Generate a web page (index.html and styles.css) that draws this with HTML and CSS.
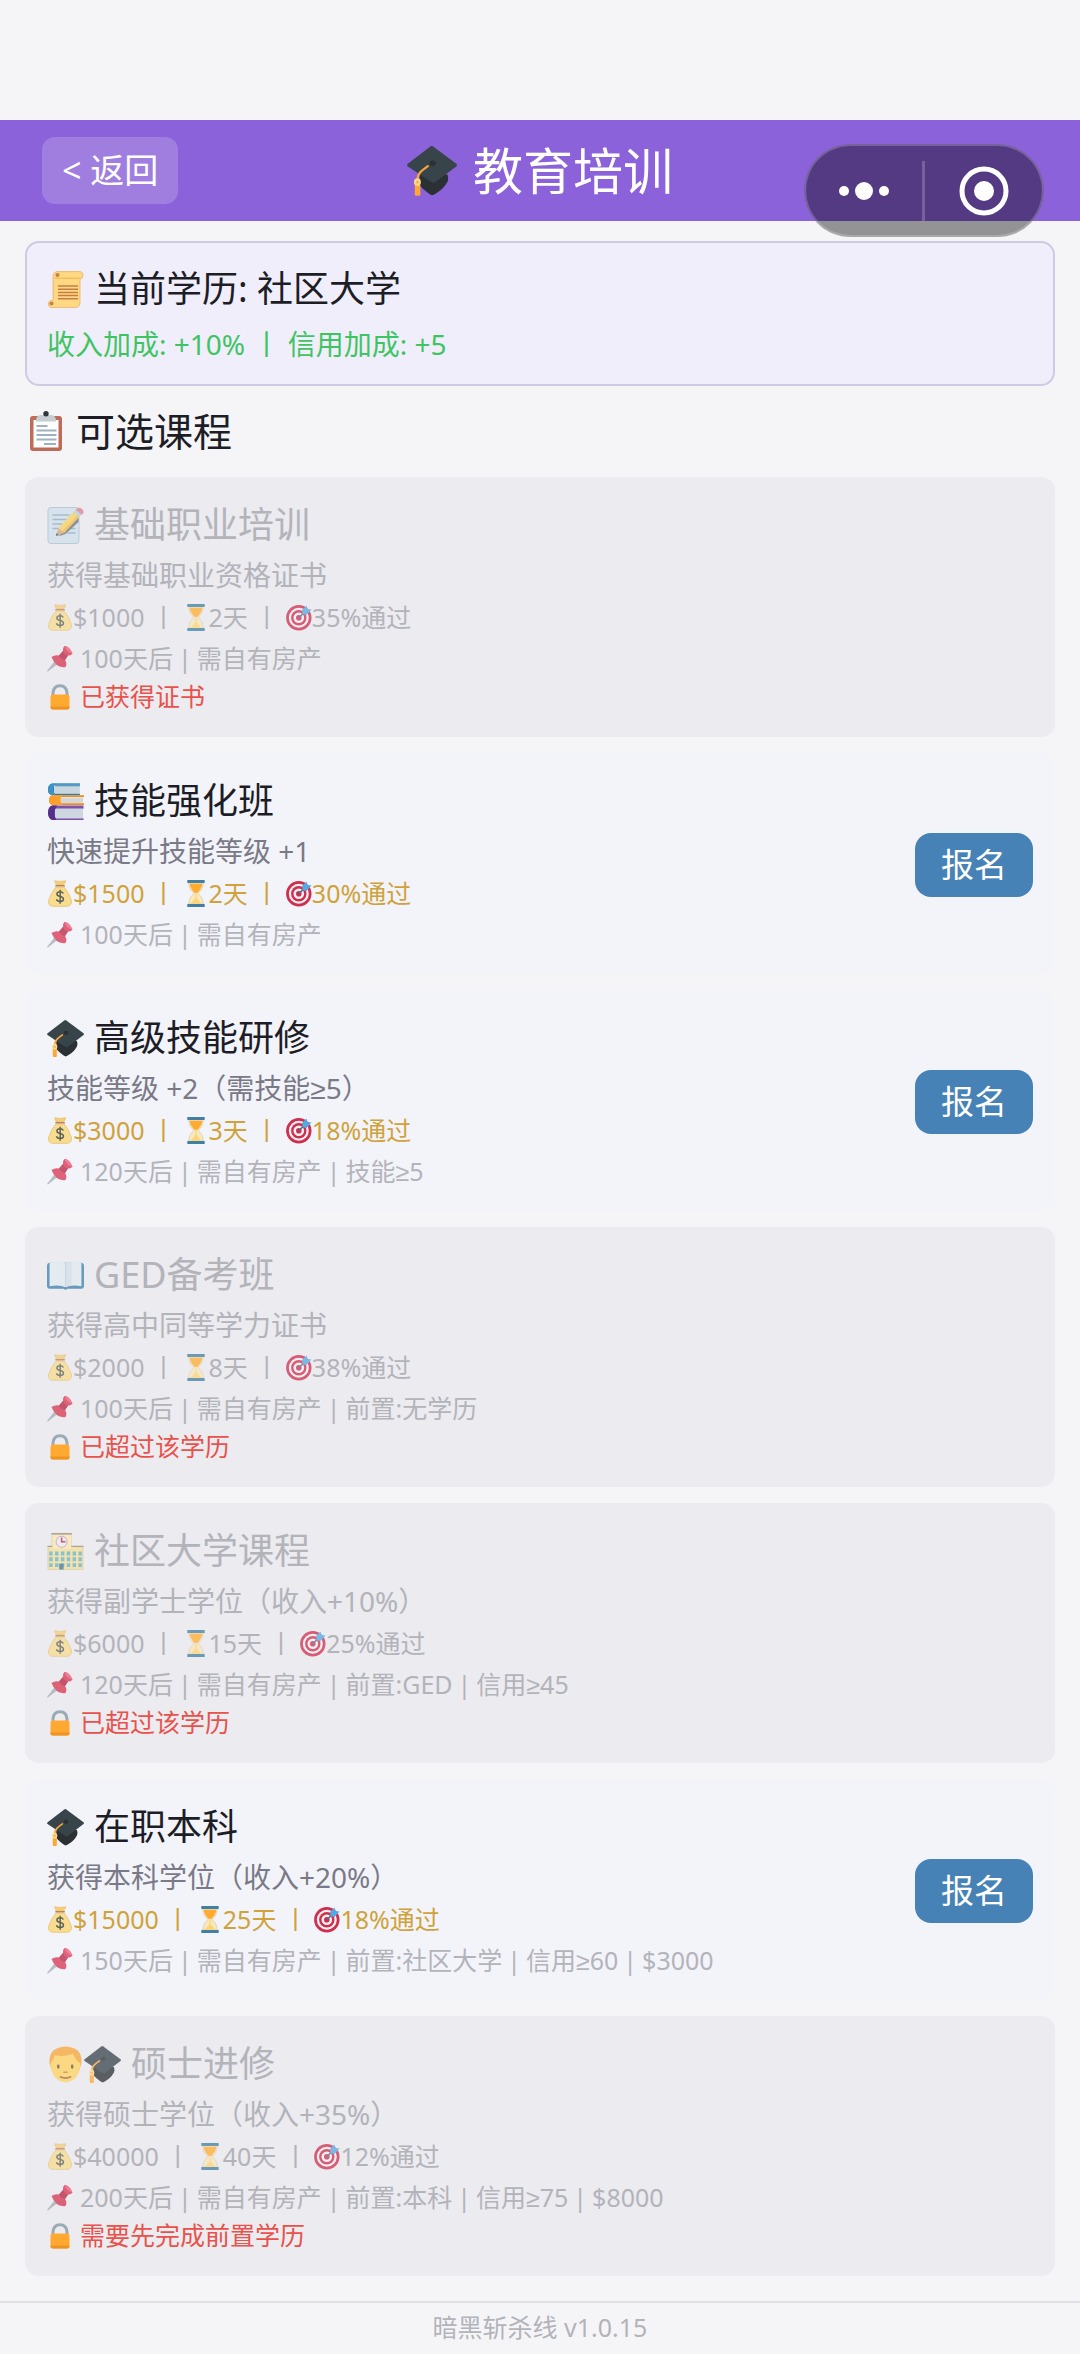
FILE: index.html
```html
<!DOCTYPE html>
<html lang="zh-CN">
<head>
<meta charset="utf-8">
<meta name="viewport" content="width=device-width, initial-scale=1">
<title>教育培训</title>
<link rel="stylesheet" href="styles.css">
</head>
<body>
<svg class="sprite" aria-hidden="true">
  <symbol id="cap" viewBox="0 0 36 36">
    <path fill="#2a3034" d="M9 18v9.500c1 2.500 6 6.500 9 8 3-1 8.500-5 10-8 2-2 2-5 1-7z"/>
    <path fill="#37444a" d="M16.800.4q1-.7 2 0L35.500 12.800q1 .9 0 1.900L20.500 26q-1.500 1-3 0L.6 14.700q-1-.9 0-1.900z"/>
    <ellipse cx="18.500" cy="12.500" rx="2.200" ry="2" fill="#2a3034"/>
    <path fill="none" stroke="#f9a63a" stroke-width="1.600" stroke-linecap="round" d="M15 14.500C10 18 7.600 20 7.500 24"/>
    <path fill="#ffa733" d="M5.600 28h4v7.400q-2 1-4 0z"/>
    <ellipse cx="7.500" cy="26" rx="2.500" ry="2.800" fill="#ffd98a"/><circle cx="7.500" cy="26" r="1.200" fill="#f0b95a"/>
  </symbol>
  <symbol id="scroll" viewBox="0 0 36 37">
    <path fill="#ffd884" stroke="#e9b35e" stroke-width=".8" d="M9 .6h24q3 1 2.500 4.400-.6 3-3 3V32q-.4 4-4 4.600H3Q.2 35 .8 31.500 2 29 5.600 29V5Q6 1.500 9 .6z"/>
    <path fill="#f5bd62" d="M9 6.500h23V8H9q-1.500 0-3-1.500z"/>
    <circle cx="10" cy="4" r="2" fill="#c98046"/><circle cx="4" cy="32.500" r="2" fill="#c98046"/>
    <path stroke="#c77c45" stroke-width="1.500" d="M10.500 15h20M10.500 18.200h20M10.500 21.400h20M10.500 24.600h20M10.500 27.800h20"/>
  </symbol>
  <symbol id="clipboard" viewBox="-3 0 38 41">
    <rect x="2" y="5" width="32" height="35" rx="3" fill="#bd6c59"/>
    <path fill="#fff" d="M5.500 9h25v27.500h-25z"/>
    <path fill="#c6ced3" d="M8 10q0-5 4-6h3.500q2.500-4.500 5 0H24q4 1 4 6v.500H8z"/>
    <circle cx="18" cy="2.800" r="2.700" fill="#30373b"/>
    <path stroke="#9db1c0" stroke-width="1.800" d="M8.500 15h11M8.500 19.500h20M8.500 24h20M8.500 28.500h20M16 33h12"/>
  </symbol>
  <symbol id="memo" viewBox="0 0 36 37">
    <rect x=".5" y=".5" width="31" height="36" rx="3" fill="#cfe1ed" stroke="#a9c0d0"/>
    <path stroke="#8eacbe" stroke-width="1.300" d="M5 8h17M5 12.500h14M5 17h10M5 21.500h6M21 21.500h7M20 26h8"/>
    <path fill="#6a7379" d="M12 28 31 10v5L18 27q-4 2-9 2z"/>
    <path fill="#f9cf5c" d="m11 21 15.500-16.500 5.500 5L16.500 26z"/>
    <path fill="#f3b64a" d="m14.500 24.500 16-16.500 1.500 1.500L16.500 26z"/>
    <path fill="#b5d0de" d="m26 5 2.200-2.300 5.600 5L31.700 10z"/>
    <path fill="#d98291" d="m28.200 2.700 2-1.600q3-1 5 1.600 1.800 2.500 0 4.200L33.800 7.700z"/>
    <path fill="#d9a878" d="m11 21 5.500 5-8 3z"/><path fill="#4a4a4a" d="m9.300 25.800 1.800 2-2.800 1.300z"/>
  </symbol>
  <symbol id="money" viewBox="0 0 26 28">
    <path fill="#f9dc8d" stroke="#dfb961" stroke-width=".7" d="M8.500 7.500h9q5 6 7.300 13.500.8 5.500-4 6.300H5Q.3 26.500 1.200 21 3.500 13.500 8.500 7.500z"/>
    <path fill="#f5ce77" stroke="#dfb961" stroke-width=".6" d="M7.500.7 13 1.500l6-.8q-.5 2.500-2 4h-8q-1.500-2-1.500-4z"/>
    <path stroke="#c08052" stroke-width="1.700" stroke-linecap="round" d="M8.800 6h8.600"/>
    <path fill="none" stroke="#59615a" stroke-width="1.500" d="M16.500 14q-1-1.800-3.500-1.800-3 0-3.200 2.200 0 2 3.200 2.600 3.600.8 3.600 3 0 2.200-3.600 2.200-3 0-3.700-2.200M13.200 10v14.500"/>
  </symbol>
  <symbol id="hourglass" viewBox="0 0 26 28">
    <path fill="#f7e8bd" stroke="#d6cba6" stroke-width=".7" d="M5.500 3h15q0 7-5.500 11 5.500 4 5.500 11h-15q0-7 5.500-11-5.500-4-5.500-11z"/>
    <path fill="#ffab32" d="M6.500 4h13q0 4.500-5.200 9.500h-2.600Q6.500 8.500 6.500 4z"/>
    <path fill="#ffd375" d="M12.300 13h1.400v6l4.800 5.500h-11l4.800-5.500z"/>
    <path fill="#417fa5" d="M4 0h18v3H4zM4 25h18V28H4z"/>
  </symbol>
  <symbol id="target" viewBox="0 0 26 26">
    <circle cx="12.800" cy="13.200" r="12.700" fill="#ce2f4e"/><circle cx="12.800" cy="13.200" r="10" fill="#faf0f3"/>
    <circle cx="12.800" cy="13.200" r="7.700" fill="#ce2f4e"/><circle cx="12.800" cy="13.200" r="5.300" fill="#faf0f3"/>
    <circle cx="12.800" cy="13.200" r="2.800" fill="#ce2f4e"/>
    <path stroke="#47718d" stroke-width="1.600" d="m12.800 13.200 7-7"/>
    <path fill="#55a8e2" d="M16 5.500 20.500 1l1 3.500L25.500 5l-5 5.500-3.800-.8z"/>
  </symbol>
  <symbol id="pin" viewBox="0 0 26 26">
    <path fill="#a7b2b9" d="m8.500 14.500 3.200 3L1 26l-1-.6z"/>
    <path fill="#d9405b" d="M4.500 11.500q3.500-2.500 7.500-1.500l4-4.500q-.8-3 1.500-5 4.500-.5 8 7.500-1.500 2.500-4.500 2l-3 4.500q2.500 3.500.5 7Q9 23 4.500 11.500z"/>
    <path fill="#b92f4a" d="M12 10l4-4.500q1.500 4 5 4.500l-3 4.500q-4-.5-6-4.500z"/>
    <path fill="#f0637c" d="M17.500.5q5 .5 8 7.500-6-1-8-7.500z"/>
  </symbol>
  <symbol id="lock" viewBox="0 0 26 26">
    <path fill="none" stroke="#9aabb6" stroke-width="3" d="M6 14V9.500Q6.500 2.300 13 2.300T20 9.500V14"/>
    <rect x="3.500" y="11" width="19" height="15" rx="2.200" fill="#ffa930"/>
    <path fill="#ee9423" d="M3.500 23h19v1q0 2-2.200 2H5.700q-2.200 0-2.200-2z"/>
  </symbol>
  <symbol id="books" viewBox="0 0 36 36">
    <path fill="#2b78aa" d="M5 .5h27v1.700H7v8h25V12H5Q1 11 1 6.300T5 .5z"/><path fill="#c8d6dd" d="M8 2.200h24v8H8Q5.500 6 8 2.200z"/><path fill="#3f92c6" d="M5 .5h3.500q-5 5.500 0 11.500H5Q1 11 1 6.300T5 .5z"/><path fill="#5599c4" d="M8 .5h24v2.700H8z"/>
    <path fill="#f28a17" d="M5 12h31v1.700H8v6h28v1.800H5Q2 20 2 16.700T5 12z"/><path fill="#d3d8d7" d="M13 14.200h22v5.200H13q-1.500-2.500 0-5.200z"/><path fill="#ff9e29" d="M5 12h10q-4 4 0 9.500H5Q2 20 2 16.700T5 12z"/>
    <path fill="#7b51a9" d="M5 22h30.500v3H8v9.200h27.500V36H5q-4-1.500-4-7t4-7z"/><path fill="#ced6df" d="M9 25h26v9.200H9Q6 29 9 25z"/><path fill="#55308a" d="M5 22h5q-5 6.500-1 14H5q-4-1.500-4-7t4-7z"/>
  </symbol>
  <symbol id="openbook" viewBox="0 0 36 28">
    <path fill="#3f7fa9" d="M2 1.500h32q2 .5 2 3V25q-.5 2-2.500 2H20l-2 1-2-1H2.500Q.5 27 0 25V4.500q0-2.500 2-3z"/>
    <path fill="#e2ebf0" d="M2.500 1.500Q12-1 18 2q6-3 15.500-.5V24.500q-9.500-2-15.500 1Q12 22.500 2.500 24.500z"/>
    <path fill="#d3e0e8" d="M18 2q3-1.500 6-1.600v23.300q-3 .3-6 1.800z"/>
    <path stroke="#c0d0da" fill="none" d="M18 2v23"/>
  </symbol>
  <symbol id="school" viewBox="0 0 37 38">
    <path fill="#f3df98" stroke="#cebd7c" stroke-width=".6" d="M.5 14h4V1.500h20V14h12v23.500H.5z"/>
    <path fill="#fae9b4" d="M5 2h19.500v14H5z"/>
    <path fill="#9b8c80" d="M4 0h21v1.500H4zM0 13h5v1.500H0zM24.500 13H37v1.500H24.500z"/>
    <circle cx="14.500" cy="9" r="5.700" fill="#efeaf0" stroke="#c09ca9"/><path fill="none" stroke="#a92f4a" stroke-width="1.500" d="M14.500 4.500V9h4"/>
    <path fill="none" stroke="#66b3c9" stroke-width="4" stroke-dasharray="3.500 2.500" d="M1.800 21h33.500M1.800 27h33.500M1.800 33h33.500"/>
    <path fill="#44778f" d="M12 31.500h4.500v6H12z"/>
  </symbol>
  <symbol id="person" viewBox="0 0 36 36">
    <path fill="#f9a638" d="M2.500 17Q1 1.500 18 .5 35 1.500 33.500 17l-2 6h-27z"/>
    <path fill="#ffd45e" d="M3.500 17q2-3 4.500-8 8 2 17.500-1.500 2.500 7 7 9.500-.5 16.500-14.500 18.500Q4 33.500 3.500 17z"/>
    <path stroke="#664e37" stroke-width="2.200" stroke-linecap="round" d="M11 19v2M24.500 19v2"/><path stroke="#c98642" stroke-width="1.600" stroke-linecap="round" d="M16.500 25.500h3"/><path fill="none" stroke="#a4673a" stroke-width="1.600" stroke-linecap="round" d="M13 30q5 2.500 10 0"/>
  </symbol>
</svg>

<header class="topbar">
  <button class="back" type="button">&lt; 返回</button>
  <h1 class="page-title"><svg class="icon-hero"><use href="#cap"/></svg>教育培训</h1>
  <div class="capsule">
    <button class="capsule-btn" type="button" aria-label="更多"><svg viewBox="0 0 50 50"><g fill="#fff"><circle cx="5" cy="25" r="5"/><circle cx="25" cy="25" r="9"/><circle cx="45" cy="25" r="5"/></g></svg></button>
    <button class="capsule-btn" type="button" aria-label="关闭"><svg viewBox="0 0 50 50"><circle cx="25" cy="25" r="22" fill="none" stroke="#fff" stroke-width="5"/><circle cx="25" cy="25" r="10" fill="#fff"/></svg></button>
  </div>
</header>

<main class="content">
  <section class="status">
    <h2 class="title"><svg class="icon"><use href="#scroll"/></svg>当前学历: 社区大学</h2>
    <p class="bonus">收入加成: +10% 丨 信用加成: +5</p>
  </section>

  <h2 class="section-title"><svg class="icon-section"><use href="#clipboard"/></svg>可选课程</h2>

  <div class="courses">
    <article class="course locked">
      <div class="info">
        <h3 class="title"><svg class="icon"><use href="#memo"/></svg>基础职业培训</h3>
        <p class="desc">获得基础职业资格证书</p>
        <p class="price"><svg><use href="#money"/></svg>$1000 丨 <svg><use href="#hourglass"/></svg>2天 丨 <svg><use href="#target"/></svg>35%通过</p>
        <p class="terms"><svg><use href="#pin"/></svg><span>100天后</span><i>|</i><span>需自有房产</span></p>
        <p class="reason"><svg><use href="#lock"/></svg>已获得证书</p>
      </div>
    </article>

    <article class="course">
      <div class="info">
        <h3 class="title"><svg class="icon"><use href="#books"/></svg>技能强化班</h3>
        <p class="desc">快速提升技能等级 +1</p>
        <p class="price"><svg><use href="#money"/></svg>$1500 丨 <svg><use href="#hourglass"/></svg>2天 丨 <svg><use href="#target"/></svg>30%通过</p>
        <p class="terms"><svg><use href="#pin"/></svg><span>100天后</span><i>|</i><span>需自有房产</span></p>
      </div>
      <button class="enroll" type="button">报名</button>
    </article>

    <article class="course">
      <div class="info">
        <h3 class="title"><svg class="icon"><use href="#cap"/></svg>高级技能研修</h3>
        <p class="desc">技能等级 +2（需技能<span class="math">≥</span>5）</p>
        <p class="price"><svg><use href="#money"/></svg>$3000 丨 <svg><use href="#hourglass"/></svg>3天 丨 <svg><use href="#target"/></svg>18%通过</p>
        <p class="terms"><svg><use href="#pin"/></svg><span>120天后</span><i>|</i><span>需自有房产</span><i>|</i><span>技能<span class="math">≥</span>5</span></p>
      </div>
      <button class="enroll" type="button">报名</button>
    </article>

    <article class="course locked">
      <div class="info">
        <h3 class="title"><svg class="icon"><use href="#openbook"/></svg>GED备考班</h3>
        <p class="desc">获得高中同等学力证书</p>
        <p class="price"><svg><use href="#money"/></svg>$2000 丨 <svg><use href="#hourglass"/></svg>8天 丨 <svg><use href="#target"/></svg>38%通过</p>
        <p class="terms"><svg><use href="#pin"/></svg><span>100天后</span><i>|</i><span>需自有房产</span><i>|</i><span>前置:无学历</span></p>
        <p class="reason"><svg><use href="#lock"/></svg>已超过该学历</p>
      </div>
    </article>

    <article class="course locked">
      <div class="info">
        <h3 class="title"><svg class="icon"><use href="#school"/></svg>社区大学课程</h3>
        <p class="desc">获得副学士学位（收入+10%）</p>
        <p class="price"><svg><use href="#money"/></svg>$6000 丨 <svg><use href="#hourglass"/></svg>15天 丨 <svg><use href="#target"/></svg>25%通过</p>
        <p class="terms"><svg><use href="#pin"/></svg><span>120天后</span><i>|</i><span>需自有房产</span><i>|</i><span>前置:GED</span><i>|</i><span>信用<span class="math">≥</span>45</span></p>
        <p class="reason"><svg><use href="#lock"/></svg>已超过该学历</p>
      </div>
    </article>

    <article class="course">
      <div class="info">
        <h3 class="title"><svg class="icon"><use href="#cap"/></svg>在职本科</h3>
        <p class="desc">获得本科学位（收入+20%）</p>
        <p class="price"><svg><use href="#money"/></svg>$15000 丨 <svg><use href="#hourglass"/></svg>25天 丨 <svg><use href="#target"/></svg>18%通过</p>
        <p class="terms"><svg><use href="#pin"/></svg><span>150天后</span><i>|</i><span>需自有房产</span><i>|</i><span>前置:社区大学</span><i>|</i><span>信用<span class="math">≥</span>60</span><i>|</i><span>$3000</span></p>
      </div>
      <button class="enroll" type="button">报名</button>
    </article>

    <article class="course locked">
      <div class="info">
        <h3 class="title"><span class="pair"><svg class="icon"><use href="#person"/></svg><svg class="icon"><use href="#cap"/></svg></span>硕士进修</h3>
        <p class="desc">获得硕士学位（收入+35%）</p>
        <p class="price"><svg><use href="#money"/></svg>$40000 丨 <svg><use href="#hourglass"/></svg>40天 丨 <svg><use href="#target"/></svg>12%通过</p>
        <p class="terms"><svg><use href="#pin"/></svg><span>200天后</span><i>|</i><span>需自有房产</span><i>|</i><span>前置:本科</span><i>|</i><span>信用<span class="math">≥</span>75</span><i>|</i><span>$8000</span></p>
        <p class="reason"><svg><use href="#lock"/></svg>需要先完成前置学历</p>
      </div>
    </article>
  </div>
</main>

<footer class="footer">暗黑斩杀线 v1.0.15</footer>
</body>
</html>
```
FILE: styles.css
```css
:root {
  --ink: #1d1d26;
  --muted: #b3b3ba;
}

* { box-sizing: border-box; }

body {
  margin: 0;
  padding-top: 120px;
  background: #f5f5f8;
  color: var(--ink);
  font-family: "Noto Sans", "Noto Sans CJK SC", sans-serif;
  font-weight: 400;
}

h1, h2, h3, p { margin: 0; font-weight: inherit; }

button {
  border: 0;
  padding: 0;
  color: #fff;
  font: inherit;
  cursor: pointer;
}

.sprite { display: none; }

.math { font-family: "Liberation Sans", sans-serif; line-height: 1; }

/* Top bar */
.topbar {
  position: relative;
  display: grid;
  grid-template-columns: 1fr auto 1fr;
  align-items: center;
  padding: 17px 42px;
  background: #8c62da;
  color: #fff;
}

.back {
  justify-self: start;
  padding: 0 20px;
  border-radius: 13px;
  background: rgba(255, 255, 255, 0.18);
  font-size: 34px;
  line-height: 67px;
}

.page-title {
  display: flex;
  align-items: center;
  gap: 16px;
  font-size: 50px;
  line-height: 64px;
}

.icon-hero { width: 50px; height: 52px; }

.capsule {
  position: absolute;
  top: 24px;
  right: 36px;
  display: flex;
  width: 240px;
  height: 93px;
  border: 2px solid rgba(255, 255, 255, 0.2);
  border-radius: 47px;
  background: rgba(0, 0, 0, 0.4);
}

.capsule-btn {
  display: grid;
  flex: 1;
  place-items: center;
  background: none;
}

.capsule-btn + .capsule-btn {
  padding-left: 4px;
  background: linear-gradient(rgba(255, 255, 255, 0.2), rgba(255, 255, 255, 0.2)) left center / 3px 60px no-repeat;
}

.capsule-btn svg { width: 50px; height: 50px; }

/* Content */
.content { padding: 20px 25px 25px; }

.status {
  padding: 22px 20px 20px;
  border: 2px solid #cfc9e4;
  border-radius: 14px;
  background: #f0eefa;
}

.title {
  display: flex;
  align-items: center;
  gap: 10px;
  font-size: 36px;
  line-height: 48px;
}

.icon { width: 37px; height: 37px; }

.pair { display: flex; }

.bonus {
  padding-top: 11px;
  color: #3fc463;
  font-size: 28px;
  line-height: 40px;
}

.section-title {
  display: flex;
  align-items: center;
  gap: 13px;
  padding: 17px 0 18px;
  font-size: 39px;
  line-height: 56px;
}

.icon-section { width: 38px; height: 41px; }

/* Courses */
.courses {
  display: flex;
  flex-direction: column;
  gap: 16px;
}

.course {
  display: flex;
  align-items: center;
  justify-content: space-between;
  padding: 24px 22px 21px;
  border-radius: 14px;
  background: #f3f4fa;
}

.desc {
  padding-top: 6px;
  color: #7a7a87;
  font-size: 28px;
  line-height: 40px;
}

.price, .terms, .reason {
  display: flex;
  align-items: center;
  font-size: 25px;
  white-space: pre;
}

.price { color: #cfa23b; line-height: 44px; }
.terms { color: var(--muted); line-height: 38px; }
.reason { color: #e9524b; line-height: 39px; }

.price svg, .terms svg, .reason svg { width: 26px; height: 27px; }
.terms svg, .reason svg { margin-right: 7px; }
.terms svg { opacity: 0.8; }
.terms i { padding: 0 5px; font-style: normal; }

.locked { background: #ebebf0; }
.locked .title, .locked .desc, .locked .price { color: var(--muted); }
.locked .title svg, .locked .price svg { opacity: 0.75; }

.enroll {
  width: 118px;
  border-radius: 16px;
  background: #4682b5;
  font-size: 33px;
  line-height: 64px;
}

.footer {
  padding: 8px 0 11px;
  border-top: 2px solid #e1e1e5;
  color: var(--muted);
  font-size: 25px;
  line-height: 32px;
  text-align: center;
}
```
